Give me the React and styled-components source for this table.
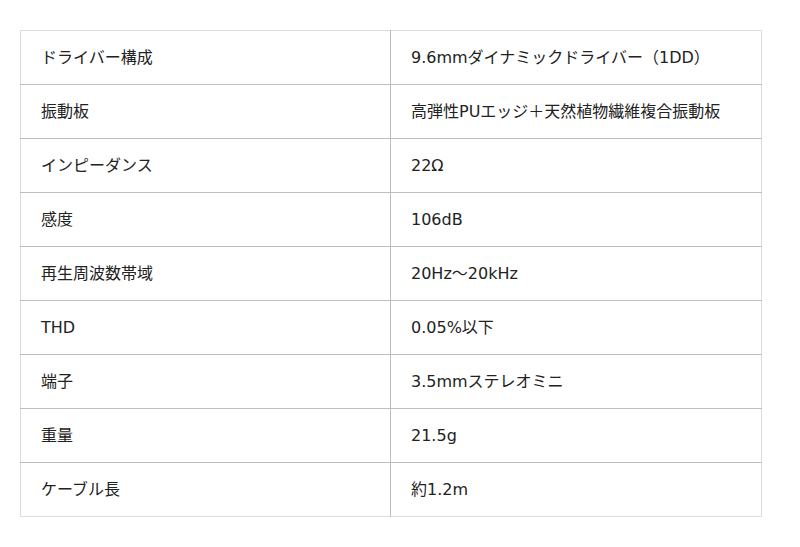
import React from 'react'
import styled, { createGlobalStyle } from 'styled-components'

const GlobalStyle = createGlobalStyle`
  body {
    margin: 0;
    background: #fff;
    font-family: "DejaVu Sans", "Noto Sans CJK JP", sans-serif;
    color: #222;
  }
`;

const specs = [
  ['ドライバー構成', '9.6mmダイナミックドライバー（1DD）'],
  ['振動板', '高弾性PUエッジ＋天然植物繊維複合振動板'],
  ['インピーダンス', '22Ω'],
  ['感度', '106dB'],
  ['再生周波数帯域', '20Hz～20kHz'],
  ['THD', '0.05%以下'],
  ['端子', '3.5mmステレオミニ'],
  ['重量', '21.5g'],
  ['ケーブル長', '約1.2m'],
];

export default function App() {
  return (
    <React.Fragment>
      <GlobalStyle />
      <Page>
        <SpecTable>
          <colgroup>
            <LabelCol />
            <col />
          </colgroup>
          <tbody>
            {specs.map(([label, value], index) => (
              <Row key={index}>
                <Cell>{label}</Cell>
                <Cell>{value}</Cell>
              </Row>
            ))}
          </tbody>
        </SpecTable>
      </Page>
    </React.Fragment>
  )
}

const Page = styled.div`
  padding: 30px 38px 30px 20px;
`;

const SpecTable = styled.table`
  width: 742px;
  border-collapse: collapse;
  table-layout: fixed;
  border: 1px solid #dcdcdc;
  font-size: 16px;
  line-height: 1.4;
`;

const LabelCol = styled.col`
  width: 370px;
`;

const Row = styled.tr`
  height: 54px;
  border-bottom: 1px solid #bdbdbd;

  &:last-child {
    border-bottom: 1px solid #dcdcdc;
  }
`;

const Cell = styled.td`
  padding: 2px 20px 0;
  vertical-align: middle;

  & + & {
    border-left: 1px solid #bdbdbd;
  }
`;
